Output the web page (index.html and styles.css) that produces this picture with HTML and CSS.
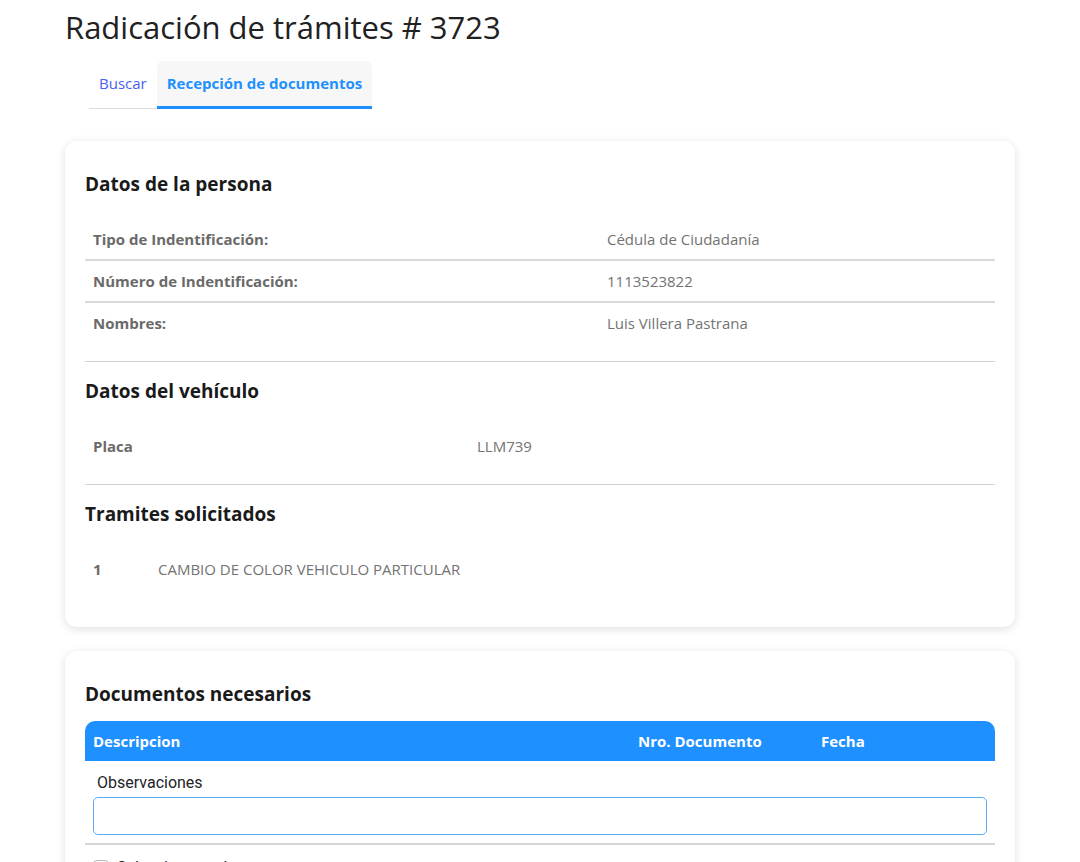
FILE: index.html
```html
<!DOCTYPE html>
<html lang="es">
<head>
<meta charset="utf-8">
<title>Radicación de trámites</title>
<link rel="stylesheet" href="styles.css">
</head>
<body>
<div class="page">
  <h1 class="title">Radicación de trámites # 3723</h1>
  <nav class="tabs">
    <a class="tab">Buscar</a>
    <a class="tab active">Recepción de documentos</a>
  </nav>

  <section class="card">
    <div class="section">
      <h2 class="section-title">Datos de la persona</h2>
      <div class="kv kv-persona">
        <div class="kv-row bordered"><span class="k">Tipo de Indentificación:</span><span class="v">Cédula de Ciudadanía</span></div>
        <div class="kv-row bordered"><span class="k">Número de Indentificación:</span><span class="v">1113523822</span></div>
        <div class="kv-row"><span class="k">Nombres:</span><span class="v">Luis Villera Pastrana</span></div>
      </div>
    </div>
    <hr class="sep">
    <div class="section">
      <h2 class="section-title">Datos del vehículo</h2>
      <div class="kv kv-vehiculo">
        <div class="kv-row"><span class="k">Placa</span><span class="v">LLM739</span></div>
      </div>
    </div>
    <hr class="sep">
    <div class="section">
      <h2 class="section-title">Tramites solicitados</h2>
      <div class="kv kv-tramites">
        <div class="kv-row"><span class="k">1</span><span class="v">CAMBIO DE COLOR VEHICULO PARTICULAR</span></div>
      </div>
    </div>
  </section>

  <section class="card">
    <h2 class="section-title">Documentos necesarios</h2>
    <div class="doc-table">
      <div class="doc-head">
        <span>Descripcion</span>
        <span>Nro. Documento</span>
        <span>Fecha</span>
      </div>
      <div class="obs">
        <label class="obs-label" for="obs">Observaciones</label>
        <input class="obs-input" id="obs" type="text">
      </div>
      <div class="select-all">
        <input type="checkbox" class="check" id="all">
        <label for="all">Seleccionar todos</label>
      </div>
    </div>
  </section>
</div>
</body>
</html>
```

FILE: styles.css
```css
* { box-sizing: border-box; }

body {
  margin: 0;
  background: #ffffff;
  font-family: "Open Sans", "Noto Sans", sans-serif;
  color: #212529;
}

.page {
  width: 950px;
  margin: 0 65px;
  padding-bottom: 40px;
}

.title {
  margin: 7px 0 0;
  font-size: 31px;
  line-height: 40px;
  font-weight: 400;
  color: #212121;
}

.tabs {
  display: flex;
  width: fit-content;
  margin: 14px 0 0 24px;
  border-bottom: 1px solid #dcdcdc;
}

.tab {
  display: block;
  padding: 12px 10px;
  font-size: 15px;
  line-height: 21px;
  color: #4a5ef2;
  border-bottom: 3px solid transparent;
  margin-bottom: -1px;
  border-radius: 6px 6px 0 0;
}

.tab.active {
  background: #f7f7f7;
  color: #1e90ff;
  font-weight: 700;
  border-bottom-color: #1e90ff;
}

.card {
  margin-top: 32px;
  background: #fff;
  border-radius: 12px;
  box-shadow: 0 2px 10px rgba(0, 0, 0, 0.13);
  padding: 31px 20px 20px;
}

.card + .card {
  margin-top: 24px;
}

.section {
  padding-bottom: 18px;
}

.section-title {
  margin: 0;
  padding-top: 1px;
  font-size: 19px;
  line-height: 23px;
  font-weight: 700;
  color: #1a1a1a;
}

.kv {
  margin-top: 23px;
}

.kv-row {
  display: grid;
  font-size: 15px;
  line-height: 20px;
}

.kv-persona .kv-row { grid-template-columns: 514px 1fr; }
.kv-vehiculo .kv-row { grid-template-columns: 384px 1fr; }
.kv-tramites .kv-row { grid-template-columns: 65px 1fr; }

.kv-row.bordered {
  border-bottom: 2px solid #d9d9d9;
}

.k, .v {
  padding: 10px 8px;
}

.k {
  font-weight: 700;
  color: #6a6a6a;
}

.v {
  color: #737373;
}

.sep {
  margin: 0 0 17px;
  border: 0;
  border-top: 1px solid #d2d2d2;
}

.doc-table {
  margin-top: 15px;
}

.doc-head {
  display: grid;
  grid-template-columns: 545px 183px 1fr;
  height: 40px;
  align-items: center;
  background: #1e90ff;
  border-radius: 10px 10px 0 0;
  color: #fff;
  font-size: 15px;
  font-weight: 700;
}

.doc-head span {
  padding: 0 8px;
}

.obs {
  padding: 10px 8px 8px;
  border-bottom: 2px solid #d6d6d6;
  font-family: Roboto, sans-serif;
}

.obs-label {
  display: block;
  margin: 0 0 2px 4px;
  font-size: 16px;
  line-height: 24px;
  color: #212529;
}

.obs-input {
  display: block;
  width: 100%;
  height: 38px;
  padding: 6px 12px;
  border: 1px solid #5ba8f5;
  border-radius: 5px;
  font-family: Roboto, sans-serif;
  font-size: 16px;
  outline: none;
}

.select-all {
  display: flex;
  align-items: center;
  gap: 8px;
  padding: 11px 8px;
  font-family: Roboto, sans-serif;
  font-size: 16px;
  line-height: 24px;
  color: #212529;
}

.check {
  width: 16px;
  height: 16px;
  margin: 0;
  appearance: none;
  border: 1px solid #b5b5b5;
  border-radius: 4px;
  background: #fff;
}
```
